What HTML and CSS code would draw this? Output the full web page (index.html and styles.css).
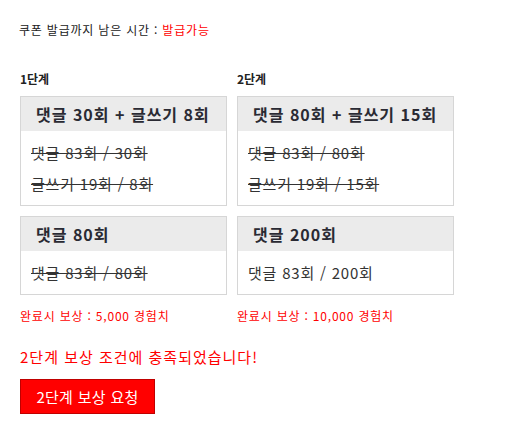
FILE: index.html
```html
<!DOCTYPE html>
<html lang="ko">
<head>
<meta charset="utf-8">
<link rel="stylesheet" href="styles.css">
</head>
<body>
<div class="page">
  <p class="timer">쿠폰 발급까지 남은 시간 : <span class="red">발급가능</span></p>
  <div class="stages">
    <div class="col col1">
      <div class="label">1단계</div>
      <div class="box">
        <div class="box-head">댓글 30회 + 글쓰기 8회</div>
        <div class="box-body">
          <div class="line done">댓글 83회 / 30회</div>
          <div class="line done">글쓰기 19회 / 8회</div>
        </div>
      </div>
      <div class="box">
        <div class="box-head">댓글 80회</div>
        <div class="box-body">
          <div class="line done">댓글 83회 / 80회</div>
        </div>
      </div>
      <div class="reward">완료시 보상 : 5,000 경험치</div>
    </div>
    <div class="col col2">
      <div class="label">2단계</div>
      <div class="box">
        <div class="box-head">댓글 80회 + 글쓰기 15회</div>
        <div class="box-body">
          <div class="line done">댓글 83회 / 80회</div>
          <div class="line done">글쓰기 19회 / 15회</div>
        </div>
      </div>
      <div class="box">
        <div class="box-head">댓글 200회</div>
        <div class="box-body">
          <div class="line">댓글 83회 / 200회</div>
        </div>
      </div>
      <div class="reward">완료시 보상 : 10,000 경험치</div>
    </div>
  </div>
  <p class="message">2단계 보상 조건에 충족되었습니다!</p>
  <button class="btn" type="button">2단계 보상 요청</button>
</div>
</body>
</html>
```
FILE: styles.css
```css
html, body {
  margin: 0;
  padding: 0;
  background: #fff;
}
body {
  font-family: "Noto Sans CJK KR", "Noto Sans", "DejaVu Sans", sans-serif;
  color: #333;
}
.page {
  padding: 21px 20px 0 19px;
}
.timer {
  margin: 0;
  font-size: 12px;
  line-height: 18px;
  color: #222;
  letter-spacing: 0.8px;
}
.red {
  color: #f00;
}
.stages {
  display: flex;
  gap: 10px;
  margin-top: 31px;
  margin-left: 1px;
}
.col {
  display: flex;
  flex-direction: column;
  gap: 10px;
}
.col1 { width: 207px; }
.col2 { width: 217px; }
.label {
  font-size: 12px;
  font-weight: bold;
  line-height: 18px;
  color: #222;
  margin-bottom: -2px;
}
.box {
  border: 1px solid #d6d6d6;
}
.box-head {
  background: #ebebeb;
  font-size: 16px;
  font-weight: bold;
  line-height: 34px;
  padding-left: 15px;
  color: #2a2a33;
  white-space: nowrap;
  letter-spacing: 1px;
}
.box-body {
  padding: 6px 10px;
}
.line {
  font-size: 15px;
  line-height: 31px;
  color: #333;
  white-space: nowrap;
  letter-spacing: 0.8px;
}
.done {
  text-decoration: line-through;
  text-decoration-color: #333;
}
.reward {
  margin-top: 2px;
  font-size: 12px;
  line-height: 18px;
  color: #f00;
  white-space: nowrap;
  letter-spacing: 0.8px;
}
.message {
  margin: 21px 0 0 1px;
  font-size: 15px;
  line-height: 22px;
  color: #f00;
  letter-spacing: 1px;
}
.btn {
  display: block;
  margin: 11px 0 0 1px;
  width: 135px;
  height: 35px;
  padding: 0;
  background: #f00;
  border: 1px solid #c00000;
  color: #fff;
  font-family: "Noto Sans CJK KR", "Noto Sans", sans-serif;
  font-size: 15px;
  line-height: 33px;
  letter-spacing: 0.3px;
  cursor: pointer;
}
```
